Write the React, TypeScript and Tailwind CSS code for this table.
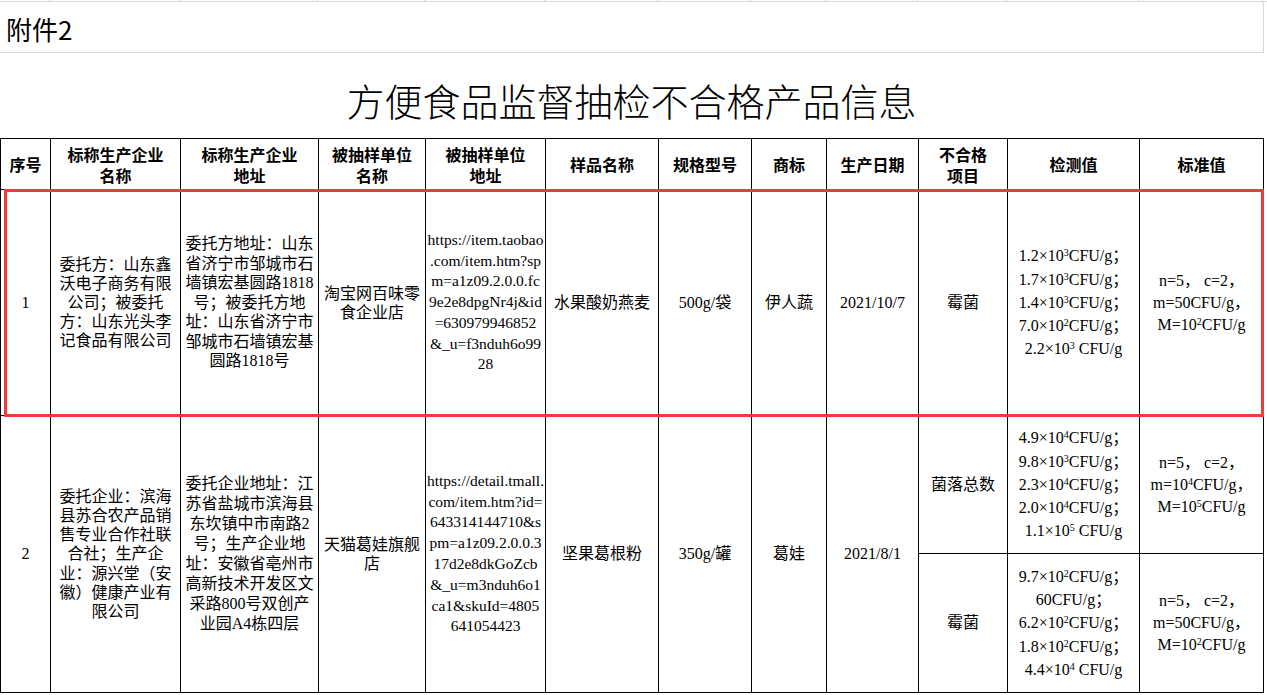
import type { ReactNode } from "react";

const COLS = [50, 130, 138, 107, 120, 113, 93, 75, 92, 89, 132, 124];

const SERIF = "font-['Liberation_Serif','Noto_Sans_CJK_SC',serif]";

function Lines({ items, className = "" }: { items: ReactNode[]; className?: string }) {
  return (
    <div className={`whitespace-nowrap text-center ${className}`}>
      {items.map((t, i) => (
        <div key={i}>{t}</div>
      ))}
    </div>
  );
}

const Cfu = ({ a, e, sp = false }: { a: string; e: string; sp?: boolean }) => (
  <>
    {a}×10<sup className="text-[10px]">{e}</sup>
    {sp ? " " : ""}CFU/g
  </>
);

function Th({ children }: { children: ReactNode }) {
  return (
    <th className="border border-black p-0 pt-[3px] text-center align-middle text-[16px] font-bold leading-[21px]">
      {children}
    </th>
  );
}

function Td({ children, rowSpan, className = "" }: { children: ReactNode; rowSpan?: number; className?: string }) {
  return (
    <td rowSpan={rowSpan} className={`border border-black p-0 text-center align-middle ${className}`}>
      {children}
    </td>
  );
}

export default function App() {
  return (
    <div className={`relative h-[695px] w-[1267px] overflow-hidden bg-white text-black ${SERIF} text-[16px]`}>
      {/* sheet grid strip */}
      <div className="flex h-[2px] border-b border-[#d6d6d6]">
        {COLS.map((w, i) => (
          <div key={i} style={{ width: w }} className="shrink-0 border-r border-[#d6d6d6]" />
        ))}
      </div>
      <div className="flex h-[51px] w-[1264px] items-center border-b border-r border-[#d6d6d6] pl-[6px] pt-[3px] font-['Noto_Sans_CJK_SC',sans-serif] text-[26px]">
        附件2
      </div>
      <div className="flex h-[85px] w-[1263px] items-center justify-center pt-[8px] font-['Noto_Sans_CJK_SC',sans-serif] text-[38px] font-light">
        方便食品监督抽检不合格产品信息
      </div>

      <table className="w-[1263px] table-fixed">
        <colgroup>
          {COLS.map((w, i) => (
            <col key={i} style={{ width: w }} />
          ))}
        </colgroup>
        <tbody>
          <tr className="h-[51px]">
            <Th>序号</Th>
            <Th>
              标称生产企业
              <br />
              名称
            </Th>
            <Th>
              标称生产企业
              <br />
              地址
            </Th>
            <Th>
              被抽样单位
              <br />
              名称
            </Th>
            <Th>
              被抽样单位
              <br />
              地址
            </Th>
            <Th>样品名称</Th>
            <Th>规格型号</Th>
            <Th>商标</Th>
            <Th>生产日期</Th>
            <Th>
              不合格
              <br />
              项目
            </Th>
            <Th>检测值</Th>
            <Th>标准值</Th>
          </tr>

          <tr className="h-[226px]">
            <Td>1</Td>
            <Td>
              <Lines
                className="leading-[19px]"
                items={["委托方：山东鑫", "沃电子商务有限", "公司；被委托", "方：山东光头李", "记食品有限公司"]}
              />
            </Td>
            <Td>
              <Lines
                className="leading-[19.5px]"
                items={[
                  "委托方地址：山东",
                  "省济宁市邹城市石",
                  "墙镇宏基圆路1818",
                  "号；被委托方地",
                  "址：山东省济宁市",
                  "邹城市石墙镇宏基",
                  "圆路1818号",
                ]}
              />
            </Td>
            <Td>
              <Lines className="leading-[19px]" items={["淘宝网百味零", "食企业店"]} />
            </Td>
            <Td>
              <Lines
                className="text-[15.5px] leading-[20.7px]"
                items={[
                  "https://item.taobao",
                  ".com/item.htm?sp",
                  "m=a1z09.2.0.0.fc",
                  "9e2e8dpgNr4j&id",
                  "=630979946852",
                  "&_u=f3nduh6o99",
                  "28",
                ]}
              />
            </Td>
            <Td>水果酸奶燕麦</Td>
            <Td>500g/袋</Td>
            <Td>伊人蔬</Td>
            <Td>2021/10/7</Td>
            <Td>霉菌</Td>
            <Td>
              <Lines
                className="leading-[23.3px]"
                items={[
                  <><Cfu a="1.2" e="3" />；</>,
                  <><Cfu a="1.7" e="3" />；</>,
                  <><Cfu a="1.4" e="3" />；</>,
                  <><Cfu a="7.0" e="2" />；</>,
                  <Cfu a="2.2" e="3" sp />,
                ]}
              />
            </Td>
            <Td>
              <Lines
                className="leading-[22px]"
                items={[
                  "n=5，  c=2，",
                  "m=50CFU/g，",
                  <>M=10<sup className="text-[10px]">2</sup>CFU/g</>,
                ]}
              />
            </Td>
          </tr>

          <tr className="h-[138px]">
            <Td rowSpan={2}>2</Td>
            <Td rowSpan={2}>
              <Lines
                className="leading-[19.2px]"
                items={[
                  "委托企业：滨海",
                  "县苏合农产品销",
                  "售专业合作社联",
                  "合社；生产企",
                  "业：源兴堂（安",
                  "徽）健康产业有",
                  "限公司",
                ]}
              />
            </Td>
            <Td rowSpan={2}>
              <Lines
                className="leading-[19.9px]"
                items={[
                  "委托企业地址：江",
                  "苏省盐城市滨海县",
                  "东坎镇中市南路2",
                  "号；生产企业地",
                  "址：安徽省亳州市",
                  "高新技术开发区文",
                  "采路800号双创产",
                  "业园A4栋四层",
                ]}
              />
            </Td>
            <Td rowSpan={2}>
              <Lines className="leading-[19px]" items={["天猫葛娃旗舰", "店"]} />
            </Td>
            <Td rowSpan={2}>
              <Lines
                className="text-[15.5px] leading-[20.8px]"
                items={[
                  "https://detail.tmall.",
                  "com/item.htm?id=",
                  "643314144710&s",
                  "pm=a1z09.2.0.0.3",
                  "17d2e8dkGoZcb",
                  "&_u=m3nduh6o1",
                  "ca1&skuId=4805",
                  "641054423",
                ]}
              />
            </Td>
            <Td rowSpan={2}>坚果葛根粉</Td>
            <Td rowSpan={2}>350g/罐</Td>
            <Td rowSpan={2}>葛娃</Td>
            <Td rowSpan={2}>2021/8/1</Td>
            <Td>菌落总数</Td>
            <Td>
              <Lines
                className="leading-[23.3px]"
                items={[
                  <><Cfu a="4.9" e="4" />；</>,
                  <><Cfu a="9.8" e="3" />；</>,
                  <><Cfu a="2.3" e="4" />；</>,
                  <><Cfu a="2.0" e="4" />；</>,
                  <Cfu a="1.1" e="5" sp />,
                ]}
              />
            </Td>
            <Td>
              <Lines
                className="leading-[22px]"
                items={[
                  "n=5，  c=2，",
                  <>m=10<sup className="text-[10px]">4</sup>CFU/g，</>,
                  <>M=10<sup className="text-[10px]">5</sup>CFU/g</>,
                ]}
              />
            </Td>
          </tr>
          <tr className="h-[139px]">
            <Td>霉菌</Td>
            <Td>
              <Lines
                className="leading-[23.3px]"
                items={[
                  <><Cfu a="9.7" e="2" />；</>,
                  "60CFU/g；",
                  <><Cfu a="6.2" e="2" />；</>,
                  <><Cfu a="1.8" e="2" />；</>,
                  <Cfu a="4.4" e="4" sp />,
                ]}
              />
            </Td>
            <Td>
              <Lines
                className="leading-[22px]"
                items={[
                  "n=5，  c=2，",
                  "m=50CFU/g，",
                  <>M=10<sup className="text-[10px]">2</sup>CFU/g</>,
                ]}
              />
            </Td>
          </tr>
        </tbody>
      </table>

      {/* highlight box around row 1 */}
      <div className="pointer-events-none absolute left-[4px] top-[189px] h-[228px] w-[1260px] border-[3px] border-[#ef3b3b]" />
    </div>
  );
}
